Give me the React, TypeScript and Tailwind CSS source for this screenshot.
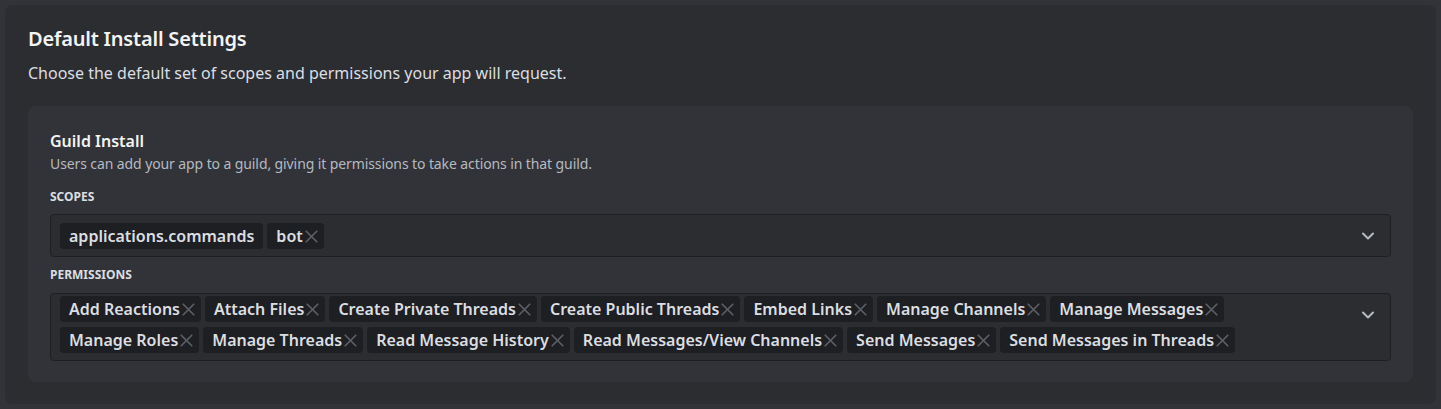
import { ChevronDown, X } from "lucide-react";

const scopes = ["applications.commands", "bot"];

const permissions = [
    "Add Reactions",
    "Attach Files",
    "Create Private Threads",
    "Create Public Threads",
    "Embed Links",
    "Manage Channels",
    "Manage Messages",
    "Manage Roles",
    "Manage Threads",
    "Read Message History",
    "Read Messages/View Channels",
    "Send Messages",
    "Send Messages in Threads",
];

const Chip = ({ label, removable = true }: { label: string; removable?: boolean }) => (
    <div className="flex items-center h-[26px] pl-[9px] pr-[2px] rounded bg-[#1e1f22] text-[#dbdee1] text-base font-semibold leading-5">
        <span className={removable ? "" : "pr-[7px]"}>{label}</span>
        {removable && <X className="size-[21px] -ml-[2px] text-[#5c5e66]" strokeWidth={2} />}
    </div>
);

const TagSelect = ({ items, fixed = [], pad }: { items: string[]; fixed?: string[]; pad: string }) => (
    <div className="flex items-start rounded-[4px] border border-[#1e1f22] bg-[#2b2d31] pl-[9px] pr-[12px]">
        <div className={`flex flex-wrap flex-1 gap-x-1 gap-y-[5px] ${pad}`}>
            {items.map((item) => (
                <Chip key={item} label={item} removable={!fixed.includes(item)} />
            ))}
        </div>
        <div className="h-[41px] flex items-center">
            <ChevronDown className="size-5 text-[#b5bac1]" strokeWidth={2.5} />
        </div>
    </div>
);

export default function App() {
    return (
        <div className="min-h-[409px] bg-[#313338] p-[5px] font-['Noto_Sans',sans-serif]">
            <div className="rounded-lg bg-[#2b2d31] pt-[22px] pb-[22px] px-[23px]">
                <h1 className="text-xl leading-6 font-semibold text-[#f2f3f5] tracking-[-0.2px]">Default Install Settings</h1>
                <p className="mt-3 text-base leading-5 text-[#dbdee1]">Choose the default set of scopes and permissions your app will request.</p>

                <div className="mt-[23px] rounded-lg bg-[#313338] px-[22px] pt-[25px] pb-[21px]">
                    <h2 className="text-base leading-5 font-semibold text-[#f2f3f5]">Guild Install</h2>
                    <p className="mt-1 text-sm leading-[18px] text-[#b5bac1] tracking-[-0.1px]">
                        Users can add your app to a guild, giving it permissions to take actions in that guild.
                    </p>

                    <div className="mt-4 mb-[9px] text-xs leading-4 font-bold uppercase text-[#dbdee1]">Scopes</div>
                    <TagSelect items={scopes} fixed={["applications.commands"]} pad="pt-[8px] pb-[7px]" />

                    <div className="mt-[10px] mb-[10px] text-xs leading-4 font-bold uppercase text-[#dbdee1]">Permissions</div>
                    <TagSelect items={permissions} pad="pt-[2px] pb-[7px]" />
                </div>
            </div>
        </div>
    );
}
